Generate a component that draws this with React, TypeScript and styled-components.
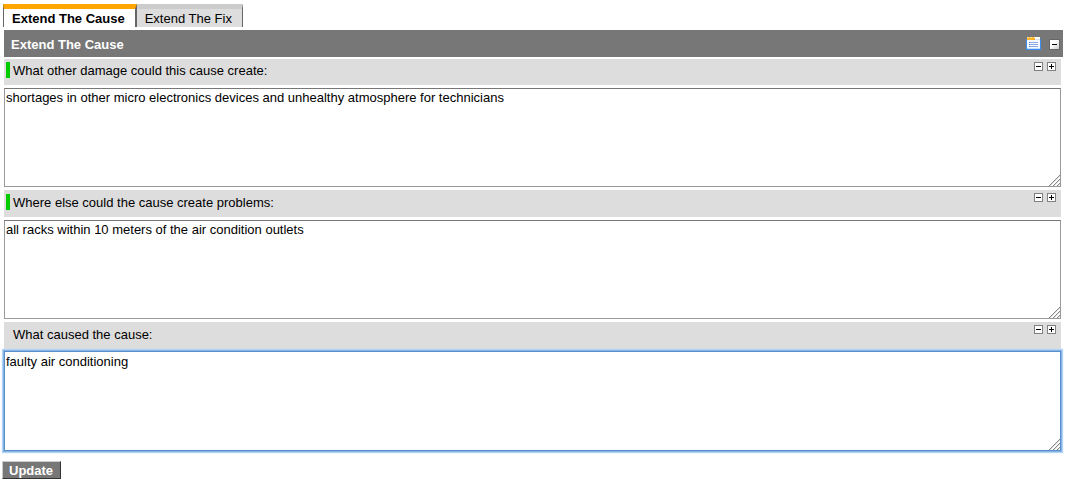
import React from "react";
import styled, { createGlobalStyle, css } from "styled-components";

const GlobalStyle = createGlobalStyle`
  * { box-sizing: border-box; }
  body {
    margin: 0;
    background: #fff;
    color: #000;
    font: 13px/16px "Liberation Sans", Arial, sans-serif;
  }
`;

const Page = styled.main`
  padding: 4px 3px 6px 4px;
`;

const Tabs = styled.div`
  display: flex;
  margin: 0 0 3px -1px;
`;

const Tab = styled.button<{ $active?: boolean }>`
  height: 23px;
  margin: 0;
  padding: 1px 10px 0 8px;
  border: 0 solid #666;
  border-top: ${(p) => (p.$active ? "5px solid #ffa500" : "5px solid #ccc")};
  border-left-width: ${(p) => (p.$active ? "1px" : "0")};
  border-right-width: ${(p) => (p.$active ? "2px" : "1px")};
  background: ${(p) => (p.$active ? "#fff" : "#ddd")};
  color: #000;
  font: ${(p) => (p.$active ? "bold" : "normal")} 13px/16px "Liberation Sans", Arial, sans-serif;
  white-space: nowrap;
`;

const Header = styled.header`
  display: flex;
  align-items: center;
  height: 27px;
  margin-bottom: 2px;
  padding: 0 3px 0 7px;
  background: #777;
  color: #fff;
`;

const Title = styled.h1`
  flex: 1;
  margin: 0;
  padding-top: 2px;
  font-size: 13px;
  line-height: 16px;
`;

const HeaderTools = styled.div`
  display: flex;
  align-items: flex-end;
  gap: 8px;
`;

const IconButton = styled.button`
  display: block;
  padding: 0;
  border: 0;
  background: none;
  svg { display: block; }
`;

const Form = styled.form`
  margin: 0;
`;

const Fields = styled.div`
  display: flex;
  flex-direction: column;
  gap: 3px;
  margin-right: 2px;
`;

const LabelRow = styled.div<{ $first?: boolean }>`
  display: flex;
  align-items: flex-start;
  gap: 4px;
  min-height: ${(p) => (p.$first ? "26px" : "27px")};
  padding: 3px 5px 0 2px;
  background: #ddd;
`;

const FieldLabel = styled.label<{ $required?: boolean; $first?: boolean }>`
  flex: 1;
  margin-top: ${(p) => (p.$first ? "0" : "1px")};
  padding: 1px 0 0 3px;
  border-left: 4px solid ${(p) => (p.$required ? "#0c0" : "transparent")};
  line-height: 15px;
`;

const AreaWrap = styled.div`
  position: relative;
  display: flex;
`;

const Area = styled.textarea<{ $focused?: boolean }>`
  flex: 1;
  min-width: 0;
  height: 99px;
  margin: 0;
  padding: 1px 1px 0;
  border: 1px solid #999;
  border-top-color: #777;
  border-radius: 0;
  outline: none;
  background: #fff;
  color: #000;
  font: inherit;
  resize: none;
  ${(p) =>
    p.$focused &&
    css`
      height: 100px;
      margin-top: -1px;
      padding-top: 2px;
      border-color: #5b8fc6;
      box-shadow: 0 0 0 1px #82b4e8, 0 0 1px 2px #b4d4f5;
    `}
`;

const Grip = styled.svg`
  position: absolute;
  right: 1px;
  bottom: 1px;
  pointer-events: none;
`;

const Submit = styled.button`
  display: block;
  height: 18px;
  margin: 10px 0 0 -2px;
  padding: 1px 7px 0 6px;
  border: 1px solid;
  border-color: #ccc #333 #333 #ccc;
  background: #777;
  color: #fff;
  font: bold 13px/15px "Liberation Sans", Arial, sans-serif;
`;

const BoxIcon = ({ plus }: { plus?: boolean }) => (
  <svg width="9" height="9" viewBox="0 0 9 9" shapeRendering="crispEdges">
    <path d="M0 0h9v9H0z" fill="#808080" />
    <path d="M1 1h7v7H1z" fill="#fff" />
    <path d="M2 4h5v1H2z" fill="#000" />
    {plus && <path d="M4 2h1v5H4z" fill="#000" />}
  </svg>
);

const CollapseIcon = () => (
  <svg width="11" height="11" viewBox="0 0 11 11" shapeRendering="crispEdges">
    <defs>
      <linearGradient id="face" x1="0" y1="0" x2="1" y2="1">
        <stop offset="0.4" stopColor="#fff" />
        <stop offset="1" stopColor="#ccc" />
      </linearGradient>
    </defs>
    <path d="M0 0h11v11H0z" fill="#666" />
    <path d="M1 1h9v9H1z" fill="url(#face)" />
    <path d="M3 5h5v1H3z" fill="#000" />
  </svg>
);

const FormIcon = () => (
  <svg width="15" height="13" viewBox="0 0 15 13" shapeRendering="crispEdges">
    <path d="M0 2h15v11H0z" fill="#3b8df0" />
    <path d="M1 3h13v9H1z" fill="#f4f9ff" />
    <path d="M1 0h7v3H1z" fill="#ffb52e" />
    <path d="M1 0h2v1H1zM4 0h2v1H4z" fill="#ffe08a" />
    <path d="M8 0h6v2H8z" fill="#fff" />
    <path d="M8 1h1v2H8z" fill="#ff9c1a" />
    <path d="M9 2h5v1H9z" fill="#d5e6fb" />
    <path d="M3 5h1v1H3zM3 7h1v1H3zM3 9h1v1H3z" fill="#4d86d8" />
    <path d="M4 5h8v1H4zM4 7h8v1H4zM4 9h8v1H4z" fill="#8fa8e0" />
    <path d="M1 11h13v1H1z" fill="#c4dffc" />
  </svg>
);

const FIELDS = [
  {
    id: "damage",
    label: "What other damage could this cause create:",
    value:
      "shortages in other micro electronics devices and unhealthy atmosphere for technicians",
    required: true,
  },
  {
    id: "where",
    label: "Where else could the cause create problems:",
    value: "all racks within 10 meters of the air condition outlets",
    required: true,
  },
  {
    id: "origin",
    label: "What caused the cause:",
    value: "faulty air conditioning",
    focused: true,
  },
];

export default function App() {
  return (
    <>
      <GlobalStyle />
      <Page>
        <Tabs role="tablist">
          <Tab role="tab" aria-selected="true" $active>
            Extend The Cause
          </Tab>
          <Tab role="tab" aria-selected="false">
            Extend The Fix
          </Tab>
        </Tabs>
        <Header>
          <Title>Extend The Cause</Title>
          <HeaderTools>
            <IconButton aria-label="Personalize form">
              <FormIcon />
            </IconButton>
            <IconButton aria-label="Collapse section">
              <CollapseIcon />
            </IconButton>
          </HeaderTools>
        </Header>
        <Form onSubmit={(e) => e.preventDefault()}>
          <Fields>
            {FIELDS.map((f, i) => (
              <React.Fragment key={f.id}>
                <LabelRow $first={i === 0}>
                  <FieldLabel htmlFor={f.id} $required={f.required} $first={i === 0}>
                    {f.label}
                  </FieldLabel>
                  <IconButton type="button" aria-label="Shrink field">
                    <BoxIcon />
                  </IconButton>
                  <IconButton type="button" aria-label="Enlarge field">
                    <BoxIcon plus />
                  </IconButton>
                </LabelRow>
                <AreaWrap>
                  <Area id={f.id} defaultValue={f.value} $focused={f.focused} />
                  <Grip width="11" height="11" viewBox="0 0 11 11">
                    <path d="M1 11L11 1M5 11L11 5M9 11L11 9" stroke="#ddd" fill="none" />
                    <path d="M0 11L11 0M4 11L11 4M8 11L11 8" stroke="#888" fill="none" />
                  </Grip>
                </AreaWrap>
              </React.Fragment>
            ))}
          </Fields>
          <Submit type="submit">Update</Submit>
        </Form>
      </Page>
    </>
  );
}
